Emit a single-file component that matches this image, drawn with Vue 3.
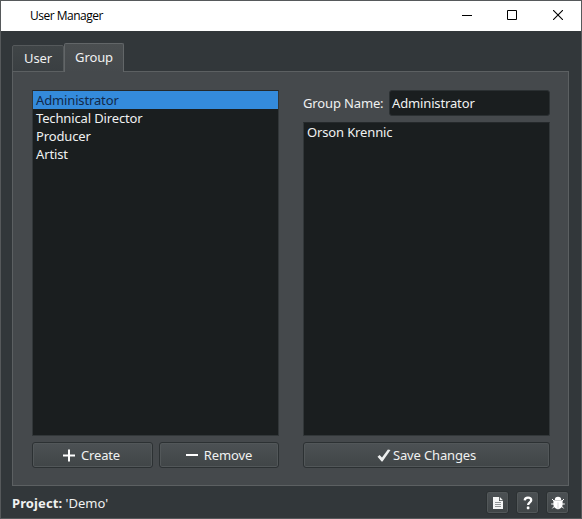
<script setup>
import { ref } from 'vue'

const tabs = ['User', 'Group']
const activeTab = ref('Group')
const groups = ['Administrator', 'Technical Director', 'Producer', 'Artist']
const selected = ref('Administrator')
const members = ['Orson Krennic']
</script>

<template>
  <div class="window">
    <header class="titlebar">
      <span class="title">User Manager</span>
      <div class="controls">
        <svg width="10" height="10" viewBox="0 0 10 10"><path d="M0 5.5H10" /></svg>
        <svg class="maximize" width="10" height="10" viewBox="0 0 10 10"><path d="M.5 .5H9.5V9.5H.5Z" /></svg>
        <svg class="close" width="10" height="10" viewBox="0 0 10 10"><path d="M0 0L10 10M10 0L0 10" /></svg>
      </div>
    </header>

    <main class="body">
      <nav class="tabs">
        <div v-for="t in tabs" :key="t" class="tab" :class="{ active: t === activeTab }" @click="activeTab = t">{{ t }}</div>
      </nav>

      <section class="panel">
        <div class="column">
          <ul class="list">
            <li v-for="g in groups" :key="g" :class="{ selected: g === selected }" @click="selected = g">{{ g }}</li>
          </ul>
          <div class="actions">
            <button class="btn create">
              <svg width="12" height="13" viewBox="0 0 12 13"><path d="M6 .5V12.5M0 6.5H12" stroke="#fff" stroke-width="2" /></svg>
              <span>Create</span>
            </button>
            <button class="btn remove">
              <svg width="12" height="13" viewBox="0 0 12 13"><path d="M0 6H12" stroke="#fff" stroke-width="2" /></svg>
              <span>Remove</span>
            </button>
          </div>
        </div>

        <div class="column">
          <div class="field">
            <span class="label">Group Name:</span>
            <div class="input">{{ selected }}</div>
          </div>
          <ul class="list members">
            <li v-for="m in members" :key="m">{{ m }}</li>
          </ul>
          <div class="actions">
            <button class="btn save">
              <svg width="14" height="13" viewBox="0 0 14 13"><path d="M.5 7.8L2.6 5.9L5 8.6L10.9 .6L13.5 .9L5.5 12.4H4.6Z" fill="#eceeee" /></svg>
              <span>Save Changes</span>
            </button>
          </div>
        </div>
      </section>

      <footer class="footer">
        <div class="project"><b>Project:</b> 'Demo'</div>
        <div class="tools">
          <button class="tool">
            <svg width="14" height="14" viewBox="0 0 14 14">
              <path d="M2 1H8V5H12V13H2Z M8.8 1L12 4.2H8.8Z" fill="#f4f5f5" />
              <path d="M4 6.5H10M4 8.5H10M4 10.5H10" stroke="#777c7f" stroke-width=".8" />
            </svg>
          </button>
          <button class="tool">
            <svg width="14" height="14" viewBox="0 0 14 14">
              <path d="M3.7 4.4C3.8 2.6 5 1.7 7 1.7C8.9 1.7 10.2 2.7 10.2 4.2C10.2 6.3 7.1 6.4 7.1 9.1" fill="none" stroke="#fff" stroke-width="2.3" />
              <rect x="5.8" y="10.5" width="2.6" height="2.7" rx=".6" fill="#fff" />
            </svg>
          </button>
          <button class="tool">
            <svg width="14" height="14" viewBox="0 0 14 14">
              <path d="M3.8 3.9A3.2 3.1 0 0 1 10.2 3.9Z" fill="#fff" />
              <path d="M2.4 4.3H11.6V8.6A4.6 4.6 0 0 1 2.4 8.6Z" fill="#fff" />
              <path d="M3.4 5.4L1 3M3.5 8H.2M3.6 10L1.4 12.4M10.6 5.4L13 3M10.5 8H13.8M10.4 10L12.6 12.4" stroke="#fff" stroke-width="1" fill="none" />
              <path d="M7 6.4V12.8" stroke="#b9bbbd" stroke-width=".6" />
            </svg>
          </button>
        </div>
      </footer>
    </main>
  </div>
</template>

<style>
body {
  margin: 0;
  overflow: hidden;
}
</style>

<style scoped>
* {
  box-sizing: border-box;
}

.window {
  width: 582px;
  height: 519px;
  display: flex;
  flex-direction: column;
  border: 1px solid #56595b;
  background: #32373a;
  color: #f0f1f1;
  font: 13px/18px "Noto Sans", sans-serif;
  letter-spacing: -0.14px;
  cursor: default;
}

.titlebar {
  height: 30px;
  flex: none;
  display: flex;
  align-items: center;
  justify-content: space-between;
  padding: 0 18px 0 29px;
  background: #fff;
  color: #000;
}

.title {
  font: 12px/28px "Open Sans", sans-serif;
  letter-spacing: -0.5px;
}

.controls {
  display: flex;
  gap: 35px;
  padding-bottom: 2px;
}

.controls svg {
  display: block;
  fill: none;
  stroke: #000;
  stroke-width: 1;
}

.controls .maximize {
  margin-right: 1px;
}

.controls .close {
  stroke-width: 1.1;
}

.body {
  flex: 1;
  display: flex;
  flex-direction: column;
  padding: 12px 12px 4px 11px;
}

.tabs {
  display: flex;
  align-items: flex-end;
  height: 29px;
  margin-bottom: -1px;
}

.tab {
  width: 52px;
  height: 27px;
  padding-top: 3px;
  text-align: center;
  border: 1px solid #55595b;
  border-radius: 2px 2px 0 0;
  background: linear-gradient(#404547, #3a3f42);
}

.tab.active {
  width: 60px;
  height: 29px;
  padding-top: 4px;
  border-color: #626668;
  border-bottom: 0;
  background: linear-gradient(#4a4e50, #45494c);
  z-index: 1;
}

.panel {
  height: 415px;
  display: flex;
  gap: 24px;
  padding: 18px 18px 17px 19px;
  border: 1px solid #5c6062;
  background: #45494c;
}

.column {
  flex: none;
  width: 247px;
  display: flex;
  flex-direction: column;
}

.list {
  flex: 1;
  margin: 0;
  padding: 0;
  list-style: none;
  background: #1a1e1f;
  border: 1px solid #323739;
  border-top-color: #25292b;
}

.list li {
  height: 18px;
  line-height: 18px;
  padding-left: 3px;
}

.list li.selected {
  color: #12294a;
  background: #348bdc;
}

.field {
  display: flex;
  align-items: center;
  justify-content: space-between;
  margin-bottom: 6px;
}

.input {
  width: 161px;
  height: 26px;
  padding-left: 2px;
  line-height: 24px;
  background: #1a1e1f;
  border: 1px solid #2b3032;
  border-radius: 3px;
}

.actions {
  display: flex;
  gap: 6px;
  margin-top: 6px;
}

.btn,
.tool {
  display: flex;
  align-items: center;
  justify-content: center;
  padding: 0;
  font: inherit;
  letter-spacing: inherit;
  color: inherit;
  border: 1px solid #2c3133;
  border-radius: 3px;
  background: linear-gradient(#4c5154, #404547);
  box-shadow: inset 0 0 0 1px #525759;
}

.btn {
  flex: 1;
  height: 26px;
  gap: 6px;
}

.create {
  flex: none;
  width: 121px;
  padding-right: 2px;
}

.save {
  gap: 2px;
}

.footer {
  flex: 1;
  display: flex;
  align-items: flex-end;
  justify-content: space-between;
}

.project {
  line-height: 22px;
  letter-spacing: 0;
}

.project b {
  letter-spacing: 0.1px;
}

.tools {
  display: flex;
  gap: 7px;
}

.tool {
  width: 23px;
  height: 23px;
}
</style>
